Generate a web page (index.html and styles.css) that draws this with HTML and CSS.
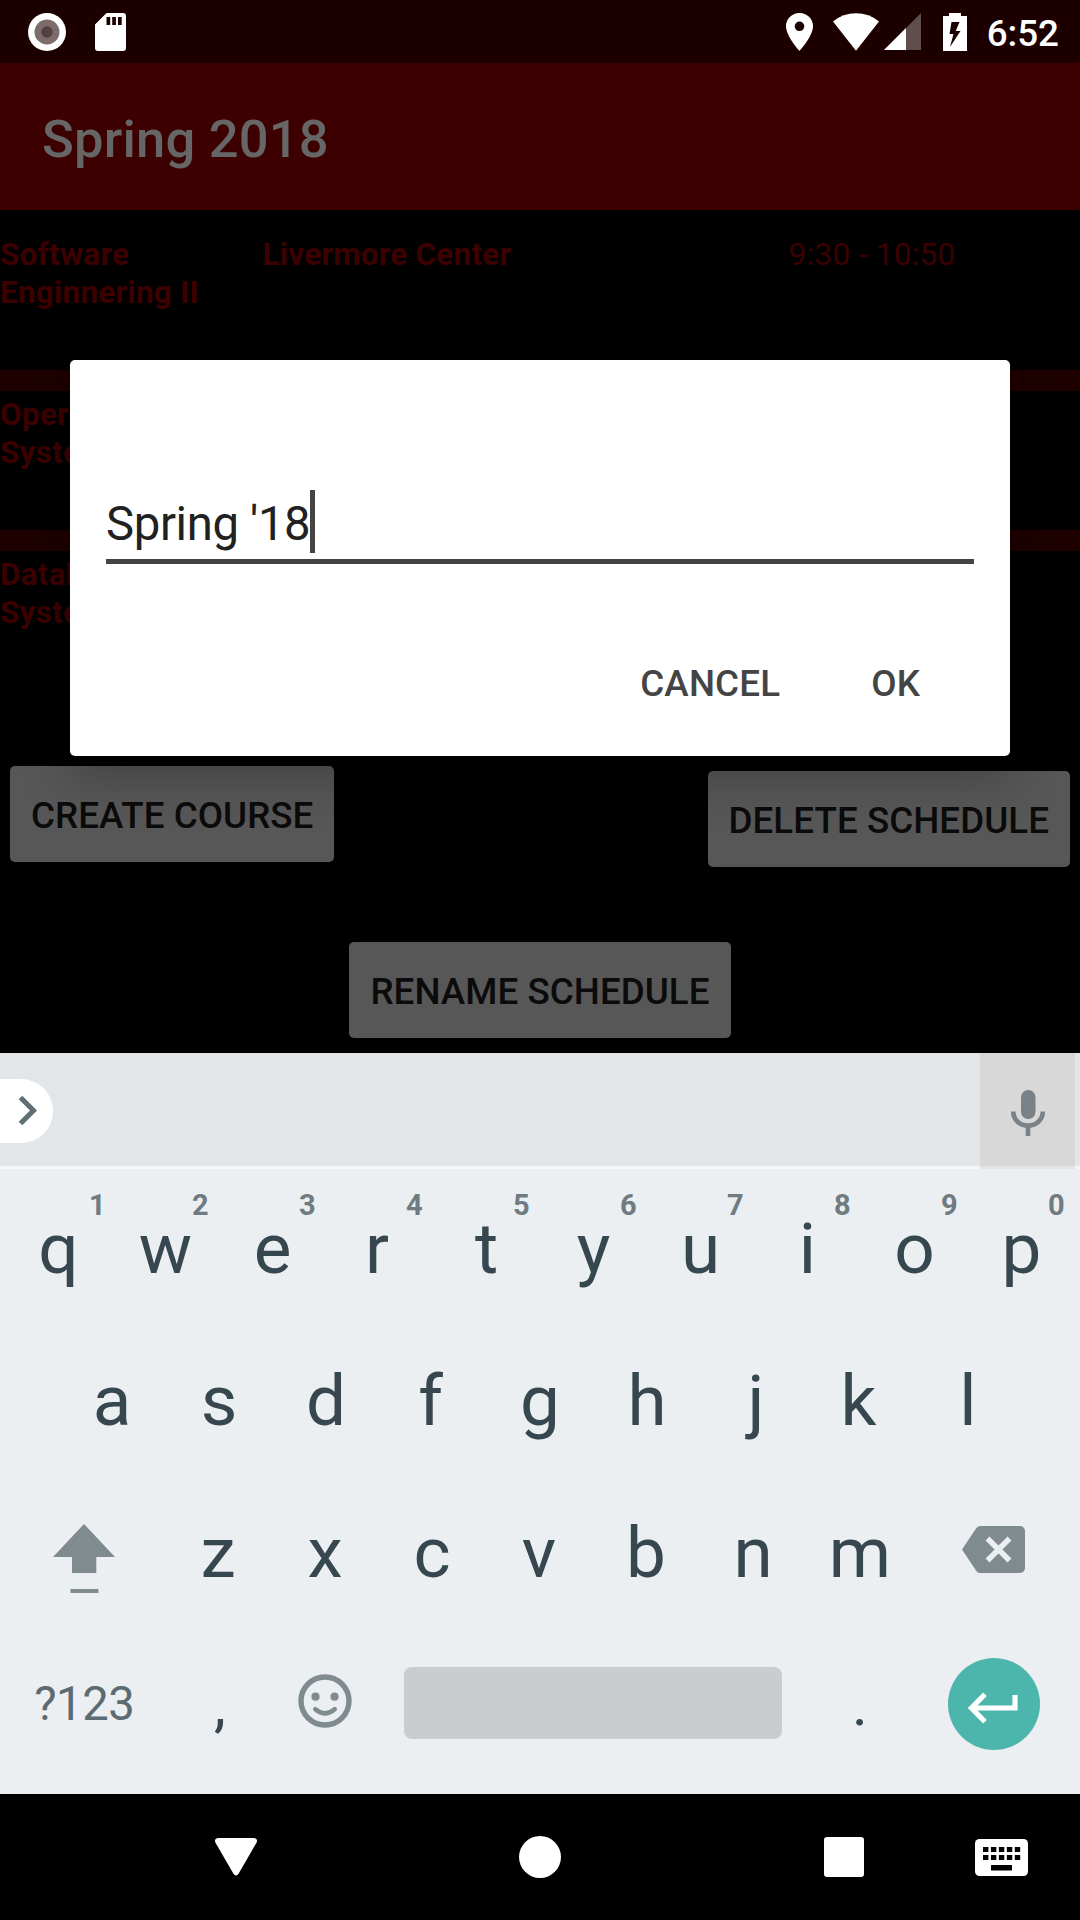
FILE: index.html
```
<!DOCTYPE html>
<html lang="en">
<head>
<meta charset="utf-8">
<title>Spring 2018</title>
<link rel="stylesheet" href="styles.css">
</head>
<body>
<div class="screen">
  <header class="status">
    <svg class="status-record" width="38" height="38" viewBox="0 0 38 38"><circle cx="19" cy="19" r="19" fill="#fff"/><circle cx="19" cy="19" r="12.5" fill="#7c6c6c"/><circle cx="19" cy="19" r="5.8" fill="#544040"/></svg>
    <svg class="status-sd" width="31" height="38" viewBox="0 0 31 38"><path fill="#fff" fill-rule="evenodd" d="M11.5 0H28a3 3 0 0 1 3 3v32a3 3 0 0 1-3 3H3a3 3 0 0 1-3-3V11.500zM11.500 4v8h3.700V4zM17.200 4v8h3.700V4zM23 4v8h3.700V4z"/></svg>
    <svg class="status-pin" width="27" height="38" viewBox="0 0 27 38"><path fill="#fff" fill-rule="evenodd" d="M13.500 0A13.400 13.400 0 0 0 0 13.300C0 23.300 13.500 38 13.500 38S27 23.300 27 13.300A13.400 13.400 0 0 0 13.500 0zm0 8.500a4.800 4.800 0 1 1 0 9.600 4.800 4.800 0 0 1 0-9.600z"/></svg>
    <svg class="status-wifi" width="46" height="38" viewBox="0 0 46 38"><path fill="#fff" d="M0 8.500Q10 .3 23 .3T46 8.500L23 37.700z"/></svg>
    <svg class="status-signal" width="37" height="37" viewBox="0 0 37 37"><path fill="#fff" fill-opacity=".3" d="M37 0v37H0z"/><path fill="#fff" d="M22 15v22H0z"/></svg>
    <svg class="status-battery" width="24" height="38" viewBox="0 0 24 38"><path fill="#fff" fill-rule="evenodd" d="M6 0h12v3h6v35H0V3h6zM8.500 9L6.500 21h4L7 34 17.500 18h-4.800L16.500 9z"/></svg>
    <span class="clock">6:52</span>
  </header>
  <h1 class="appbar">Spring 2018</h1>
  <main class="content">
    <section class="courses">
      <div class="course"><b>Software Enginnering II</b><b>Livermore Center</b><span class="time">9:30 - 10:50</span></div>
      <div class="course"><b>Operating Systems</b></div>
      <div class="course"><b>Database Systems</b></div>
    </section>
    <div class="actions">
      <button class="btn">CREATE COURSE</button>
      <button class="btn btn-delete">DELETE SCHEDULE</button>
    </div>
    <div class="actions-center"><button class="btn">RENAME SCHEDULE</button></div>
    <div class="dialog">
      <div class="field"><span>Spring '18</span><i class="caret"></i></div>
      <div class="dialog-actions"><span>CANCEL</span><span>OK</span></div>
    </div>
  </main>
  <section class="keyboard">
    <div class="strip">
      <span class="expand"><svg width="20" height="32" viewBox="0 0 20 32"><path d="M2.500 2.500L15.500 15.500 2.500 28.500" fill="none" stroke="#5f6f74" stroke-width="5"/></svg></span>
      <span class="mic"><svg width="34" height="46" viewBox="0 0 34 46"><rect x="10" width="14.500" height="29" rx="7.200" fill="#7a8288"/><path d="M2.200 21.500C2.200 30 9 35.500 17 35.500S31.800 30 31.800 21.500M17 35v11" fill="none" stroke="#7a8288" stroke-width="4.600"/></svg></span>
    </div>
    <div class="keys">
      <div class="row">
        <span class="key first">q<sup>1</sup></span><span class="key">w<sup>2</sup></span><span class="key">e<sup>3</sup></span><span class="key pull">r<sup>4</sup></span><span class="key">t<sup>5</sup></span><span class="key">y<sup>6</sup></span><span class="key">u<sup>7</sup></span><span class="key">i<sup>8</sup></span><span class="key">o<sup>9</sup></span><span class="key">p<sup>0</sup></span>
      </div>
      <div class="row row-home">
        <span class="key">a</span><span class="key">s</span><span class="key">d</span><span class="key pull">f</span><span class="key">g</span><span class="key">h</span><span class="key push">j</span><span class="key pull">k</span><span class="key">l</span>
      </div>
      <div class="row row-lower">
        <span class="key wide shift"><svg width="62" height="69" viewBox="0 0 62 69"><path fill="#808b90" d="M31 0L62 33H43.300V49H19V33H0zM17.500 65h28v4h-28z"/></svg></span>
        <span class="key">z</span><span class="key">x</span><span class="key">c</span><span class="key">v</span><span class="key">b</span><span class="key">n</span><span class="key">m</span>
        <span class="key wide backspace"><svg width="63" height="47" viewBox="0 0 63 47"><path fill="#808b90" d="M18 0H58a5 5 0 0 1 5 5V42a5 5 0 0 1-5 5H18q-2.500 0-4-2.500L0 23.500 14 2.500Q15.500 0 18 0z"/><path d="M25.500 12.500l22 22m0-22l-22 22" stroke="#ebeff2" stroke-width="5.500"/></svg></span>
      </div>
      <div class="row row-lower">
        <span class="key wide symbols">?123</span>
        <span class="key punct comma">,</span>
        <span class="key emoji"><svg width="54" height="54" viewBox="0 0 54 54"><circle cx="27" cy="27" r="24" fill="none" stroke="#808b90" stroke-width="5.400"/><circle cx="17.500" cy="22.700" r="4.100" fill="#808b90"/><circle cx="36.500" cy="22.700" r="4.100" fill="#808b90"/><path d="M17.300 35.300Q27 43.500 36.700 35.300" fill="none" stroke="#808b90" stroke-width="4.600" stroke-linecap="round"/></svg></span>
        <span class="key space"></span>
        <span class="key punct">.</span>
        <span class="key wide"><span class="enter"><svg width="50" height="32" viewBox="0 0 50 32"><path d="M17 2.200L3.500 16 17 29.800M3.500 16H47V3" fill="none" stroke="#fff" stroke-width="5.200"/></svg></span></span>
      </div>
    </div>
  </section>
  <nav class="navbar">
    <svg class="nav-back" width="42" height="38" viewBox="0 0 42 38"><path fill="#fff" d="M3 0H39Q43.200.5 41.600 4.500L23.700 35.500Q21 39.500 18.300 35.500L.4 4.500Q-1.200.5 3 0z"/></svg>
    <svg class="nav-home" width="42" height="42" viewBox="0 0 42 42"><circle cx="21" cy="21" r="21" fill="#fff"/></svg>
    <svg class="nav-recent" width="40" height="40" viewBox="0 0 40 40"><rect width="40" height="40" rx="3" fill="#fff"/></svg>
    <svg class="nav-ime" width="53" height="37" viewBox="0 0 53 37"><rect width="53" height="37" rx="4.500" fill="#fff"/><path d="M8 10.500h37.500M8 18.500h37.500" stroke="#000" stroke-width="5" stroke-dasharray="5.400 2.550"/><path fill="#000" d="M16 26h21v5.500H16z"/></svg>
  </nav>
</div>
</body>
</html>
```
FILE: styles.css
```
* { box-sizing: border-box; }

body {
  margin: 0;
  background: #000;
  font-family: Roboto, "Liberation Sans", sans-serif;
}

svg { display: block; flex: none; }

.screen {
  width: 1080px;
  height: 1920px;
  display: flex;
  flex-direction: column;
  overflow: hidden;
}

/* Status bar */
.status {
  height: 63px;
  flex: none;
  display: flex;
  align-items: center;
  padding: 0 21px 0 28px;
  background: #1c0000;
  color: #fff;
}
.status-sd { margin-left: 29px; }
.status-pin { margin-left: auto; }
.status-wifi { margin-left: 20px; }
.status-signal { margin-left: 5px; }
.status-battery { margin-left: 22px; }
.clock {
  margin-left: 20px;
  padding-top: 4px;
  font-size: 36.75px;
  font-weight: 500;
}

.appbar {
  height: 147px;
  flex: none;
  margin: 0;
  padding: 5px 42px 0;
  display: flex;
  align-items: center;
  background: #3c0000;
  color: #666;
  font-size: 52.5px;
  font-weight: 500;
  letter-spacing: .2px;
}

/* Schedule */
.content {
  height: 843px;
  flex: none;
  position: relative;
  padding-top: 21px;
}
.courses { height: 535px; }
.course {
  display: grid;
  grid-template-columns: 262.5px 525px 1fr;
  height: 160px;
  padding-top: 5px;
  border-bottom: 21px solid #1e0000;
  color: #3c0000;
  font-size: 31.5px;
  line-height: 38px;
  letter-spacing: .22px;
}
.course:last-child { border-bottom: 0; }
.time { padding-left: 1px; letter-spacing: .3px; }

.btn {
  height: 96px;
  padding: 3px 21px 0;
  border: 0;
  border-radius: 5px;
  background: #575757;
  color: #0b0b0b;
  font: 500 36.75px Roboto, "Liberation Sans", sans-serif;
  letter-spacing: .05px;
}
.actions {
  display: flex;
  justify-content: space-between;
  align-items: flex-start;
  padding: 0 10px;
  height: 176px;
}
.btn-delete { margin-top: 5px; }
.actions-center { display: flex; justify-content: center; }

.dialog {
  position: absolute;
  top: 150px;
  left: 70px;
  width: 940px;
  height: 396px;
  padding: 130px 36px 0;
  border-radius: 5px;
  background: #fff;
  box-shadow: 0 20px 50px rgba(0, 0, 0, .26);
}
.field {
  display: flex;
  align-items: flex-start;
  height: 74px;
  border-bottom: 5px solid #444;
  color: #212121;
  font-size: 47.25px;
  line-height: 68px;
  letter-spacing: -.35px;
}
.caret { width: 5px; height: 63px; background: #444; }
.dialog-actions {
  display: flex;
  justify-content: flex-end;
  gap: 91px;
  padding: 98px 54px 0 0;
  color: #444;
  font-size: 36.75px;
  font-weight: 500;
  line-height: 43px;
  letter-spacing: .15px;
}

/* Keyboard */
.keyboard {
  height: 741px;
  flex: none;
  background: #ebeff2;
}
.strip {
  height: 116px;
  display: flex;
  justify-content: space-between;
  padding-right: 5px;
  background: #e2e6e9;
  border-bottom: 3px solid #f4f6f8;
}
.expand {
  width: 53px;
  height: 64px;
  margin-top: 26px;
  padding: 16px 0 0 18px;
  border-radius: 0 32px 32px 0;
  background: #fff;
}
.mic {
  width: 95px;
  height: 116px;
  padding: 37px 0 0 31px;
  background: rgba(194, 186, 182, .3);
}
.keys { padding: 3px 5px 0; }
.row { display: flex; height: 152px; }
.row-home { padding: 0 53.5px; }
.row-lower { margin-left: -1px; }
.key {
  position: relative;
  width: 107px;
  display: flex;
  align-items: center;
  justify-content: center;
  color: #37474f;
  font-size: 71px;
}
.key sup {
  position: absolute;
  top: 15px;
  left: 80px;
  color: #6f7b81;
  font-size: 29px;
  font-weight: 700;
  line-height: 36px;
}
.first sup { left: 84px; }
.pull { padding-right: 5px; }
.push { padding-left: 4px; }
.wide { width: 160.5px; }
.shift { padding-top: 13px; }
.backspace { padding-bottom: 5px; }
.symbols { font-size: 47.25px; color: #5b6b71; letter-spacing: -.5px; }
.punct { font-size: 60px; }
.comma { padding-left: 4px; }
.emoji { padding-bottom: 6px; }
.space {
  width: 378px;
  height: 72px;
  margin: 39px 25px 0;
  border-radius: 8px;
  background: #c9cdd0;
}
.enter {
  width: 92px;
  height: 92px;
  padding: 34px 0 0 20px;
  border-radius: 50%;
  background: #4db6ac;
}

/* Navigation */
.navbar {
  height: 126px;
  flex: none;
  display: flex;
  align-items: center;
  padding-left: 215px;
}
.nav-home { margin-left: 262px; }
.nav-recent { margin-left: 263px; }
.nav-ime { margin-left: 111px; }
```
